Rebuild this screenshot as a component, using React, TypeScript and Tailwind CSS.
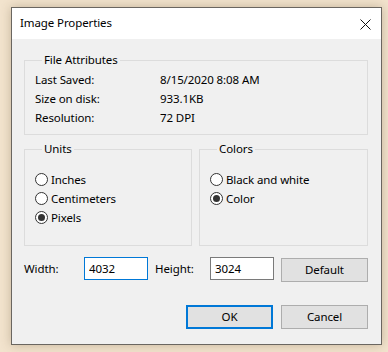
import { useState } from 'react';

const font = { fontFamily: '"Noto Sans", "Open Sans", sans-serif' };

function Radio({ label, checked, onClick }: { label: string; checked: boolean; onClick: () => void }) {
  return (
    <button onClick={onClick} className="flex h-[19px] items-center text-left">
      <span className="flex h-[13px] w-[13px] items-center justify-center rounded-full border border-[#333] bg-white">
        {checked && <span className="h-[7px] w-[7px] rounded-full bg-[#333]" />}
      </span>
      <span className="ml-[3px]">{label}</span>
    </button>
  );
}

export default function App() {
  const [units, setUnits] = useState('pixels');
  const [colors, setColors] = useState('color');
  const [width, setWidth] = useState('4032');
  const [height, setHeight] = useState('3024');

  const attributes = [
    ['Last Saved:', '8/15/2020 8:08 AM'],
    ['Size on disk:', '933.1KB'],
    ['Resolution:', '72 DPI'],
  ];

  return (
    <div className="h-[352px] w-[388px] bg-[#f2e3cd] pl-[11px] pt-[7px] text-[11.5px] tracking-[-0.1px] text-black" style={font}>
      <div className="flex h-[338px] w-[371px] flex-col border border-[#6a6660] bg-[#f0f0f0] shadow-[0_0_10px_rgba(90,70,40,0.3)]">
        {/* Title bar */}
        <div className="flex h-[31px] items-center justify-between bg-white pl-[8px] pr-[10px]">
          <span className="pb-[1px]">Image Properties</span>
          <svg width="11" height="11" viewBox="0 0 11 11" className="mt-[1px]">
            <path d="M0.5 0.5L10.5 10.5M10.5 0.5L0.5 10.5" stroke="#111" strokeWidth="1" />
          </svg>
        </div>

        <div className="flex flex-col px-[12px]">
          {/* File Attributes */}
          <fieldset className="mt-[13px] h-[83px] w-[344px] border border-[#dcdcdc] pl-[10px] pt-[2px]">
            <legend className="ml-[7px] px-[2px] leading-[16px]">File Attributes</legend>
            {attributes.map(([k, v]) => (
              <div key={k} className="flex h-[19px] items-center">
                <span className="w-[125px]">{k}</span>
                <span>{v}</span>
              </div>
            ))}
          </fieldset>

          {/* Units and Colors */}
          <div className="mt-[6px] flex gap-[7px]">
            <fieldset className="flex h-[105px] w-[168px] flex-col border border-[#dcdcdc] pl-[10px] pt-[13px]">
              <legend className="ml-[7px] px-[2px] leading-[16px]">Units</legend>
              <Radio label="Inches" checked={units === 'inches'} onClick={() => setUnits('inches')} />
              <Radio label="Centimeters" checked={units === 'cm'} onClick={() => setUnits('cm')} />
              <Radio label="Pixels" checked={units === 'pixels'} onClick={() => setUnits('pixels')} />
            </fieldset>
            <fieldset className="flex h-[105px] w-[169px] flex-col border border-[#dcdcdc] pl-[10px] pt-[13px]">
              <legend className="ml-[7px] px-[2px] leading-[16px]">Colors</legend>
              <Radio label="Black and white" checked={colors === 'bw'} onClick={() => setColors('bw')} />
              <Radio label="Color" checked={colors === 'color'} onClick={() => setColors('color')} />
            </fieldset>
          </div>

          {/* Size inputs */}
          <div className="mt-[11px] flex h-[24px] items-start">
            <span className="mt-[3px] w-[60px]">Width:</span>
            <input
              value={width}
              onChange={(e) => setWidth(e.target.value)}
              className="h-[23px] w-[64px] border border-[#0078d7] bg-white px-[4px] outline-none"
            />
            <span className="ml-[7px] mt-[3px] w-[55px]">Height:</span>
            <input
              value={height}
              onChange={(e) => setHeight(e.target.value)}
              className="h-[23px] w-[64px] border border-[#7a7a7a] bg-white px-[4px] outline-none"
            />
            <button className="ml-[7px] mt-[1px] h-[24px] w-[87px] border border-[#adadad] bg-[#e1e1e1]">Default</button>
          </div>

          {/* Dialog buttons */}
          <div className="mt-[24px] flex justify-end gap-[8px] pr-[1px]">
            <button className="h-[24px] w-[87px] border-2 border-[#0078d7] bg-[#e1e1e1]">OK</button>
            <button className="h-[24px] w-[87px] border border-[#adadad] bg-[#e1e1e1]">Cancel</button>
          </div>
        </div>
      </div>
    </div>
  );
}
